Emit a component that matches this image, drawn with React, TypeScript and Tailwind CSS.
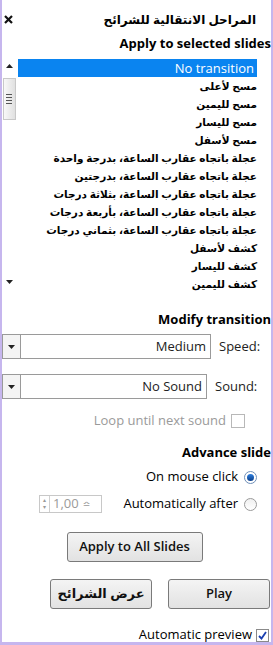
const transitions = [
  'No transition',
  'مسح لأعلى',
  'مسح لليمين',
  'مسح لليسار',
  'مسح لأسفل',
  'عجلة باتجاه عقارب الساعة، بدرجة واحدة',
  'عجلة باتجاه عقارب الساعة، بدرجتين',
  'عجلة باتجاه عقارب الساعة، بثلاثة درجات',
  'عجلة باتجاه عقارب الساعة، بأربعة درجات',
  'عجلة باتجاه عقارب الساعة، بثماني درجات',
  'كشف لأسفل',
  'كشف لليسار',
  'كشف لليمين',
]

const Caret = ({ up }: { up?: boolean }) => (
  <svg width="7" height="4" viewBox="0 0 7 4">
    <path d={up ? 'M0 4h7L3.5 0z' : 'M0 0h7L3.5 4z'} fill="#222" />
  </svg>
)

const Combo = ({ value, label, width }: { value: string; label: string; width: string }) => (
  <div className="flex items-center h-[25px]">
    <div className={`flex h-full border border-[#9a9a9a] bg-white ${width}`}>
      <div className="w-[18px] border-r border-[#9a9a9a] flex items-center justify-center bg-[#f4f4f4]">
        <Caret />
      </div>
      <div className="flex-1 text-right pr-[4px] leading-[23px] text-[13px] text-[#222]">{value}</div>
    </div>
    <span className="ml-[8px] text-[13px] text-[#222]">{label}</span>
  </div>
)

const Button = ({ children, className }: { children: React.ReactNode; className: string }) => (
  <button className={`h-[30px] rounded-[3px] border border-[#7a7a7a] bg-gradient-to-b from-[#f4f4f4] to-[#e2e2e2] text-[13px] font-semibold text-[#111] ${className}`}>
    {children}
  </button>
)

export default function App() {
  return (
    <div
      className="w-[273px] h-[645px] bg-white border-l-2 border-r-2 border-b-[3px] border-[#c6b6ee] flex flex-col overflow-hidden text-black"
      style={{ fontFamily: '"Open Sans", "DejaVu Sans", sans-serif' }}
    >
      <div className="flex items-center justify-between h-[16px] mt-[12px] pl-[2px] pr-[15px]">
        <svg width="9" height="9" viewBox="0 0 9 9" className="-mt-[2px]">
          <path d="M1 1l7 7M8 1l-7 7" stroke="#111" strokeWidth="2.2" />
        </svg>
        <span className="text-[12px] font-bold" dir="rtl">المراحل الانتقالية للشرائح</span>
      </div>
      <div className="h-[16px] mt-[7px] text-right text-[13px] font-bold leading-[16px]">Apply to selected slides</div>

      <div className="flex h-[236px] mt-[8px]">
        <div className="w-[14px] flex flex-col items-center">
          <div className="h-[8px] mt-[3px] flex items-center justify-center">
            <Caret up />
          </div>
          <div className="w-[13px] h-[42px] mt-[8px] border border-[#c8c8c8] bg-gradient-to-r from-[#f8f8f8] to-[#e0e0e0] flex flex-col items-center justify-center gap-[2px]">
            <div className="w-[6px] h-px bg-[#555]" />
            <div className="w-[6px] h-px bg-[#555]" />
            <div className="w-[6px] h-px bg-[#555]" />
            <div className="w-[6px] h-px bg-[#555]" />
          </div>
          <div className="flex-1" />
          <div className="h-[8px] mb-[7px] flex items-center justify-center">
            <Caret />
          </div>
        </div>
        <ul className="flex-1 ml-[2px] mr-[14px]">
          {transitions.map((t, i) => (
            <li
              key={t}
              dir={i === 0 ? 'ltr' : 'rtl'}
              className={
                i === 0
                  ? 'h-[18px] bg-[#0a84f0] text-white text-right pr-[3px] text-[13px] leading-[18px]'
                  : 'h-[18px] text-right pl-[3px] text-[10.5px] font-bold leading-[18px] whitespace-nowrap'
              }
            >
              {t}
            </li>
          ))}
        </ul>
      </div>

      <div className="h-[16px] mt-[18px] text-right text-[13px] font-bold leading-[16px]">Modify transition</div>
      <div className="mt-[7px] flex flex-col gap-[15px]">
        <Combo value="Medium" label="Speed:" width="w-[209px]" />
        <Combo value="No Sound" label="Sound:" width="w-[205px]" />
      </div>

      <div className="flex items-center justify-end h-[16px] mt-[14px] pr-[26px] text-[13px] text-[#9a9a9a]">
        <span>Loop until next sound</span>
        <span className="ml-[5px] w-[14px] h-[14px] border border-[#b8b8b8] bg-white" />
      </div>

      <div className="h-[16px] mt-[15px] text-right text-[13px] font-bold leading-[16px]">Advance slide</div>
      <div className="flex items-center justify-end h-[16px] mt-[9px] pr-[14px] text-[13px]">
        <span>On mouse click</span>
        <span className="ml-[6px] w-[13px] h-[13px] rounded-full border border-[#6f8fb8] bg-white flex items-center justify-center">
          <span className="w-[7px] h-[7px] rounded-full bg-gradient-to-b from-[#2e7fe0] to-[#0b3f8a]" />
        </span>
      </div>
      <div className="flex items-center h-[18px] mt-[10px] pr-[14px] text-[13px]">
        <div className="ml-[37px] w-[63px] h-[18px] border border-[#c8c8c8] flex items-center text-[#9a9a9a]">
          <div className="w-[10px] h-full border-r border-[#d0d0d0] flex flex-col items-center justify-center text-[6px] leading-[7px]">
            <span>▴</span>
            <span>▾</span>
          </div>
          <span className="ml-[3px]">1,00</span>
          <span className="ml-[4px] text-[9px]">≏</span>
        </div>
        <div className="flex-1" />
        <span>Automatically after</span>
        <span className="ml-[6px] w-[13px] h-[13px] rounded-full border border-[#9a9a9a] bg-gradient-to-b from-[#f0f0f0] to-white" />
      </div>

      <div className="flex justify-center mt-[19px]">
        <Button className="w-[136px] ml-[-4px]">Apply to All Slides</Button>
      </div>
      <div className="flex justify-end gap-[16px] mt-[17px] pr-[1px]">
        <Button className="w-[102px]">
          <span dir="rtl">عرض الشرائح</span>
        </Button>
        <Button className="w-[102px]">Play</Button>
      </div>

      <div className="flex items-center justify-end h-[14px] mt-[19px] pr-[2px] text-[13px]">
        <span>Automatic preview</span>
        <span className="ml-[4px] w-[13px] h-[13px] border border-[#8a8a8a] bg-white flex items-center justify-center">
          <svg width="9" height="9" viewBox="0 0 9 9">
            <path d="M1 5l2.5 2.5L8 1" stroke="#1a3fb0" strokeWidth="1.8" fill="none" />
          </svg>
        </span>
      </div>
    </div>
  )
}
